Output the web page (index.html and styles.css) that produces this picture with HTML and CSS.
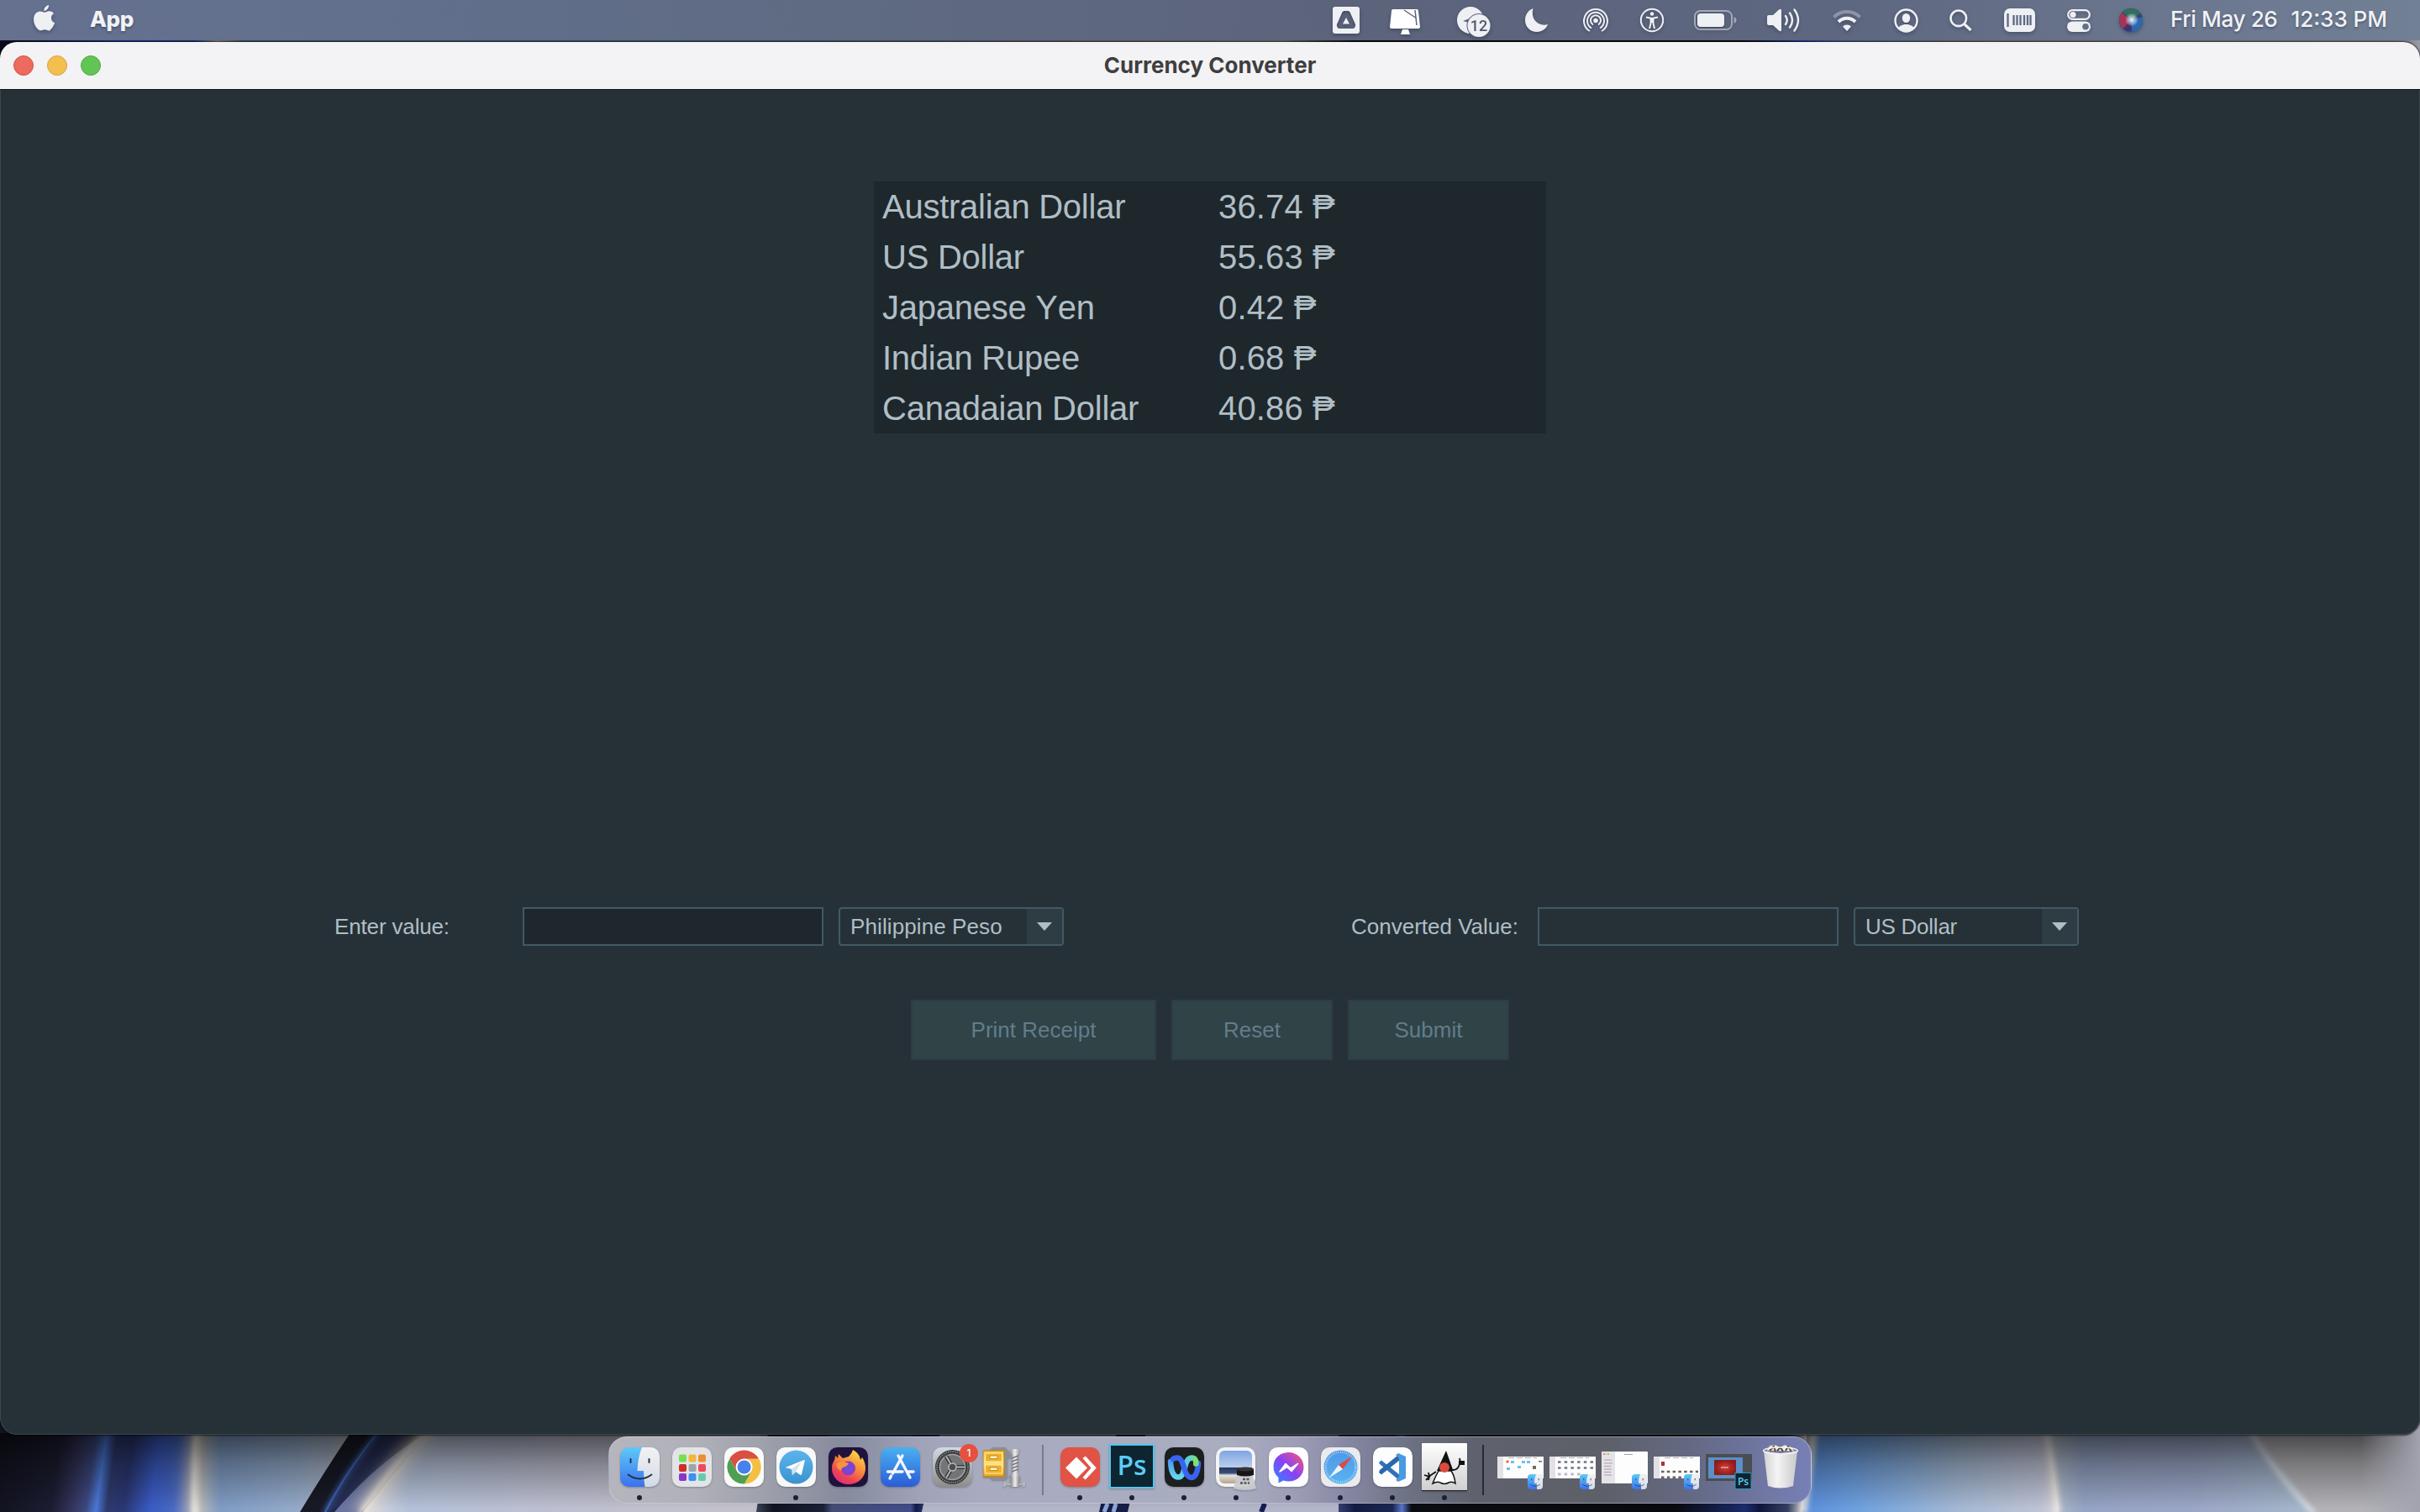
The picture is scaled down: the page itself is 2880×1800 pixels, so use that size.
FILE: index.html
```html
<!DOCTYPE html>
<html lang="en">
<head>
<meta charset="utf-8">
<title>Currency Converter</title>
<link rel="stylesheet" href="styles.css">
</head>
<body>
<svg class="wallpaper" viewBox="0 0 2880 1800" aria-hidden="true">
  <defs>
    <linearGradient id="wBlue" gradientUnits="userSpaceOnUse" x1="0" y1="1750" x2="242" y2="1784">
      <stop offset="0" stop-color="#12131f"/><stop offset=".27" stop-color="#1b1c30"/><stop offset=".37" stop-color="#33345a"/>
      <stop offset=".44" stop-color="#3c4880"/><stop offset=".49" stop-color="#4a78d8"/><stop offset=".54" stop-color="#2e3a6e"/>
      <stop offset=".62" stop-color="#2a3670"/><stop offset=".75" stop-color="#3a5bc4"/><stop offset=".86" stop-color="#4868c0"/>
      <stop offset="1" stop-color="#8d95b4"/>
    </linearGradient>
    <linearGradient id="wSteel" x1="0" x2="1"><stop offset="0" stop-color="#aab0ba"/><stop offset=".15" stop-color="#7f9cc4"/><stop offset=".6" stop-color="#93a9c8"/><stop offset="1" stop-color="#b4b5bd"/></linearGradient>
    <linearGradient id="wGray" gradientUnits="userSpaceOnUse" x1="430" y1="0" x2="905" y2="0"><stop offset="0" stop-color="#d8d8dc"/><stop offset=".12" stop-color="#b3c0d8"/><stop offset=".5" stop-color="#bebfd0"/><stop offset="1" stop-color="#c3c2ca"/></linearGradient>
    <linearGradient id="wMid" gradientUnits="userSpaceOnUse" x1="900" y1="0" x2="1100" y2="0"><stop offset="0" stop-color="#3b4358"/><stop offset=".1" stop-color="#10131f"/><stop offset=".4" stop-color="#1a2036"/><stop offset=".45" stop-color="#444c74"/><stop offset=".92" stop-color="#414c88"/><stop offset=".95" stop-color="#131a48"/><stop offset="1" stop-color="#2a366e"/></linearGradient>
    <linearGradient id="wDark" gradientUnits="userSpaceOnUse" x1="1590" y1="0" x2="2150" y2="0"><stop offset="0" stop-color="#3a4478"/><stop offset=".04" stop-color="#131b42"/><stop offset=".12" stop-color="#1b2750"/><stop offset=".14" stop-color="#5875c8"/><stop offset=".16" stop-color="#0a0c12"/><stop offset=".72" stop-color="#08090e"/><stop offset=".87" stop-color="#1b2b6c"/><stop offset=".9" stop-color="#10153a"/><stop offset=".96" stop-color="#353f62"/><stop offset="1" stop-color="#f3efe6"/></linearGradient>
    <linearGradient id="wRight" gradientUnits="userSpaceOnUse" x1="2150" y1="0" x2="2450" y2="0"><stop offset="0" stop-color="#5b8fdb"/><stop offset=".2" stop-color="#6ea0de"/><stop offset=".6" stop-color="#a3b8d3"/><stop offset=".93" stop-color="#bfc3d5"/><stop offset="1" stop-color="#d8d6dc"/></linearGradient>
    <linearGradient id="wRight2" gradientUnits="userSpaceOnUse" x1="2445" y1="0" x2="2730" y2="0"><stop offset="0" stop-color="#adb9c8"/><stop offset=".12" stop-color="#95a3c4"/><stop offset=".6" stop-color="#9ba6c6"/><stop offset="1" stop-color="#a3b5ca"/></linearGradient>
    <linearGradient id="wShade" x1="0" x2="0" y1="0" y2="1"><stop offset="0" stop-opacity=".6"/><stop offset=".4" stop-opacity=".32"/><stop offset="1" stop-opacity="0"/></linearGradient>
    <linearGradient id="wEdge" x1="0" x2="1"><stop offset="0" stop-color="#a2a3af" stop-opacity="0"/><stop offset="1" stop-color="#a2a3af"/></linearGradient>
    <linearGradient id="wTop" x1="0" x2="1"><stop offset="0" stop-color="#08091a"/><stop offset=".05" stop-color="#1b2f7a"/><stop offset=".08" stop-color="#1d2f70"/><stop offset=".09" stop-color="#8a7c6c"/><stop offset=".1" stop-color="#3b4d63"/><stop offset=".3" stop-color="#3a4c62"/><stop offset=".53" stop-color="#6a6664"/><stop offset=".56" stop-color="#07080f"/><stop offset=".72" stop-color="#07080f"/><stop offset=".745" stop-color="#1d3a90"/><stop offset=".76" stop-color="#3d5c80"/><stop offset=".82" stop-color="#6a6664"/><stop offset=".99" stop-color="#74747c"/><stop offset="1" stop-color="#9b9ba6"/></linearGradient>
    <filter id="soft" filterUnits="userSpaceOnUse" x="0" y="1660" width="2880" height="180"><feGaussianBlur stdDeviation="3"/></filter>
    <filter id="softer" filterUnits="userSpaceOnUse" x="0" y="1660" width="2880" height="180"><feGaussianBlur stdDeviation="9"/></filter>
  </defs>
  <rect width="2880" height="1800" fill="#a4a4ae"/>
  <rect width="1400" height="1700" fill="#0b0c16"/>
  <rect y="40" width="2880" height="30" fill="url(#wTop)"/>
  <path d="M0 1680H240V1800H0z" fill="url(#wBlue)"/>
  <path d="M238 1680Q236 1740 234 1800H430V1680z" fill="url(#wSteel)"/>
  <path d="M507 1700 428 1800H905V1700z" fill="url(#wGray)"/>
  <path d="M425 1694Q392 1742 357 1800H432L520 1690z" fill="#171924"/>
  <path d="M456 1694Q420 1745 388 1800H415L500 1695z" fill="#262f55" filter="url(#soft)"/>
  <path d="M450 1705Q413 1750 386 1802" fill="none" stroke="#4168bd" stroke-width="4" filter="url(#soft)"/>
  <path d="M450 1705Q413 1750 386 1802" fill="none" stroke="#3d62b4" stroke-width="2"/>
  <path d="M508 1706Q450 1740 398 1800H430L525 1690z" fill="#7a86b4" opacity=".8"/>
  <path d="M512 1700Q470 1742 430 1802" fill="none" stroke="#e4ddd4" stroke-width="16" filter="url(#softer)"/>
  <path d="M512 1700Q470 1742 430 1802" fill="none" stroke="#ece7de" stroke-width="6" filter="url(#soft)"/>
  <path d="M235 1690Q230 1750 232 1810" fill="none" stroke="#cfc4b4" stroke-width="16" filter="url(#softer)"/>
  <path d="M235 1690Q230 1750 232 1810" fill="none" stroke="#fbf7ec" stroke-width="6" filter="url(#soft)"/>
  <path d="M915 1700 900 1800H1097L1120 1700z" fill="url(#wMid)"/>
  <path d="M1120 1700 1097 1800H1600V1700z" fill="#b3b5c8"/>
  <path d="M1330 1700 1308 1800H1342L1365 1700z" fill="#161d47"/>
  <path d="M1318 1790 1314 1800M1328 1790 1325 1800" stroke="#8fa6d8" stroke-width="5"/>
  <path d="M1505 1790 1501 1800" stroke="#151d50" stroke-width="6"/>
  <path d="M1593 1680H2150V1800H1593z" fill="url(#wDark)"/>
  <path d="M2160 1700 2145 1800H2460L2435 1700z" fill="url(#wRight)"/>
  <path d="M2435 1700Q2446 1750 2450 1800H2760L2680 1700z" fill="url(#wRight2)"/>
  <path d="M2676 1700 2756 1800H2880V1700z" fill="#b2b2b7"/>
  <path d="M2160 1700 2146 1802M2435 1700Q2443 1740 2449 1802" fill="none" stroke="#ebe7e2" stroke-width="7" filter="url(#soft)"/>
  <path d="M2677 1702Q2705 1750 2754 1802" fill="none" stroke="#e6e4e2" stroke-width="5" filter="url(#soft)"/>
  <rect y="1706" width="2880" height="90" fill="url(#wShade)"/>
  <rect x="2810" y="1680" width="70" height="120" fill="url(#wEdge)"/>
</svg>

<header class="menubar">
  <svg class="apple" viewBox="0 0 26 32"><path d="M18 0c.3 3.600-2.500 7-5.600 7C12 3.700 15 .5 18 0zM13.200 8.700c1.300 0 3-1.500 5.600-1.400 2 .1 4 1 5.200 2.800-4.600 3-3.700 9.200 1.100 11.200-1.100 3.200-3.500 7.500-6 8.900-2.200.8-3.500-1-5.900-1s-3.600 1.700-5.700 1C2.200 28.300-1.600 19 .8 12.800 2 9.500 4.700 7.600 7.500 7.500c2.400 0 4 1.200 5.700 1.200z"/></svg>
  <strong class="menubar-app">App</strong>
  <div class="status">
    <svg class="m0" width="32" height="32" viewBox="0 0 32 32"><path fill-rule="evenodd" d="M3 0h26a3 3 0 0 1 3 3v26a3 3 0 0 1-3 3H3a3 3 0 0 1-3-3V3a3 3 0 0 1 3-3zm11 5c-1.200 0-2 .5-2.600 1.600L5 21c-.6 1.300.8 5 2.600 5h16.800c1.800 0 3.200-3.700 2.600-5L20.600 6.600C20 5.500 19.200 5 18 5zM16 13l4 7.500h-8z"/></svg>
    <svg class="m36 cleaner" width="36" height="32" viewBox="0 0 36 32"><path d="M4 1h28a2 2 0 0 1 2 2l2 19a2 2 0 0 1-2 2H2a2 2 0 0 1-2-2L2 3a2 2 0 0 1 2-2zM15 25h7l2 6H13z"/><path d="M17 2 32 12M30 2l2 18" stroke="#5c647c" stroke-width="1.500" fill="none"/></svg>
    <svg class="m44" width="40" height="36" viewBox="0 0 40 36"><circle cx="16" cy="16" r="16"/><path d="m7 17 16-6-3 12-6-4-7-2z" fill="#5c647c"/><circle cx="26" cy="22.500" r="14.500" fill="#5c647c"/><circle cx="26" cy="22.500" r="13.500"/><text x="26" y="29" text-anchor="middle" class="badge-num">12</text></svg>
    <svg class="m41" width="27" height="28" viewBox="0 0 27 28"><path d="M9.500 0C4 2 0 7.500 0 14c0 8 6.200 14 14 14 6 0 11-3.600 13-9C17 22 6 14 9.500 0z"/></svg>
    <svg class="m42 line" width="30" height="30" viewBox="0 0 30 30"><path d="M8 28A14 14 0 1 1 22 28M10 24.500a10 10 0 1 1 10 0M12 20.500a6 6 0 1 1 6 0" stroke-width="2"/><circle cx="15" cy="15.500" r="2.800" class="solid"/></svg>
    <svg class="m37 line" width="30" height="30" viewBox="0 0 30 30"><circle cx="15" cy="15" r="13.200" stroke-width="2"/><circle cx="15" cy="7.500" r="2.200" class="solid"/><path d="M8 11.500 15 13l7-1.500M13.500 13v6L12 25M16.500 13v6l1.500 6M15 13v5" stroke-width="2"/></svg>
    <svg class="m35" width="51" height="24" viewBox="0 0 51 24"><rect x="1" y="1" width="44" height="22" rx="6.500" fill="none" stroke="#eef0f4" stroke-opacity=".5" stroke-width="2"/><rect x="4" y="4" width="32" height="16" rx="4"/><path d="M47.500 8c4 1.500 4 6.500 0 8z" opacity=".5"/></svg>
    <svg class="m36" width="39" height="28" viewBox="0 0 39 28"><path d="M0 10q0-2 2-2h5l7-6.500q3-2 3 1v23q0 3-3 1L7 20H2q-2 0-2-2z"/><path d="M22 9q3.500 5 0 10M27 5.500q6 8.500 0 17M32.500 1.500q9 12.500 0 25" fill="none" stroke="#eef0f4" stroke-width="2.400" stroke-linecap="round"/></svg>
    <svg class="m39 line" width="34" height="26" viewBox="0 0 34 26"><path d="M1.500 9.500a22 22 0 0 1 31 0" stroke-width="4" opacity=".35"/><path d="M7 15a14 14 0 0 1 20 0" stroke-width="4"/><path d="M12 20.500a7 7 0 0 1 10 0L17 26z" class="solid"/></svg>
    <svg class="m39 line" width="29" height="29" viewBox="0 0 29 29"><circle cx="14.500" cy="14.500" r="13" stroke-width="2.400"/><ellipse cx="14.500" cy="11.500" rx="4.700" ry="5.500" class="solid"/><path d="M5 23.500c3-6 16-6 19 0-5 5-14 5-19 0z" class="solid"/></svg>
    <svg class="m37 line" width="27" height="26" viewBox="0 0 27 26"><circle cx="10.800" cy="10.800" r="9.300" stroke-width="2.600"/><path d="m17.500 17.500 8 7.500" stroke-width="3.200"/></svg>
    <svg class="m38" width="37" height="28" viewBox="0 0 37 28"><rect width="37" height="28" rx="7"/><path d="M4.500 6v16M11.500 8v12M15.500 8v12M19.500 8v12M24 8v12M28 8v12M31.500 8v12" stroke="#5f6a84" stroke-width="2.300"/></svg>
    <svg class="m38" width="28" height="27" viewBox="0 0 28 27"><rect x="1.200" y="1.200" width="25.600" height="10.600" rx="5.300" fill="none" stroke="#eef0f4" stroke-width="2.200"/><circle cx="7" cy="6.500" r="3.600"/><rect y="14.500" width="28" height="12.500" rx="6.200"/><circle cx="22" cy="20.700" r="3.800" fill="#646f8a"/></svg>
    <svg class="m34" width="28" height="28" viewBox="0 0 28 28"><defs><radialGradient id="siri"><stop offset="0" stop-color="#fff"/><stop offset=".3" stop-color="#cfe4f4" stop-opacity=".8"/><stop offset="1" stop-color="#fff" stop-opacity="0"/></radialGradient></defs><circle cx="14" cy="14" r="14" fill="#34456a"/><path d="M14 14 4 4A14 14 0 0 1 25 6z" fill="#2f6f5c"/><path d="M14 14 3 5A14 14 0 0 0 5 24z" fill="#a83358"/><path d="M14 14 28 10A14 14 0 0 1 10 27z" fill="#2c66ac"/><path d="M14 14 5 24q5 5 10 3z" fill="#3c3470"/><circle cx="15" cy="13.500" r="8" fill="url(#siri)"/></svg>
  </div>
  <time class="clock"><span class="date">Fri May 26</span><span>12:33 PM</span></time>
</header>

<main class="window">
  <div class="titlebar">
    <div class="lights"><i class="light close"></i><i class="light minimize"></i><i class="light zoom"></i></div>
    <h1>Currency Converter</h1>
  </div>
  <div class="content">
    <table class="rates">
      <tr><td>Australian Dollar</td><td>36.74 ₱</td></tr>
      <tr><td>US Dollar</td><td>55.63 ₱</td></tr>
      <tr><td>Japanese Yen</td><td>0.42 ₱</td></tr>
      <tr><td>Indian Rupee</td><td>0.68 ₱</td></tr>
      <tr><td>Canadaian Dollar</td><td>40.86 ₱</td></tr>
    </table>
    <form class="converter">
      <div class="fields">
        <label class="label-in" for="amount">Enter value:</label>
        <input class="field editable" id="amount" type="text">
        <div class="combo"><span class="peso">Philippine Peso</span><i><svg width="18" height="10" viewBox="0 0 18 10"><path d="M0 0h18L9 10z"/></svg></i></div>
        <label class="label-out" for="result">Converted Value:</label>
        <input class="field" id="result" type="text" readonly>
        <div class="combo"><span class="dollar">US Dollar</span><i><svg width="18" height="10" viewBox="0 0 18 10"><path d="M0 0h18L9 10z"/></svg></i></div>
      </div>
      <div class="actions">
        <button class="wide" disabled>Print Receipt</button>
        <button disabled>Reset</button>
        <button disabled>Submit</button>
      </div>
    </form>
  </div>
</main>

<nav class="dock">
  <svg class="defs" aria-hidden="true"><defs>
    <linearGradient id="gCyan" x2="0" y2="1"><stop stop-color="#5fc9f8"/><stop offset="1" stop-color="#3a72ee"/></linearGradient>
    <linearGradient id="gWhite" x2="0" y2="1"><stop stop-color="#f2f2f5"/><stop offset="1" stop-color="#d3dae4"/></linearGradient>
    <linearGradient id="gTele" x2="0" y2="1"><stop stop-color="#5bb5ec"/><stop offset="1" stop-color="#3a93d0"/></linearGradient>
    <linearGradient id="gStore" x2="0" y2="1"><stop stop-color="#4ab0f0"/><stop offset="1" stop-color="#2a5cd8"/></linearGradient>
    <linearGradient id="gFox" x1=".8" x2=".2" y2="1"><stop stop-color="#fce34a"/><stop offset=".4" stop-color="#f88f3c"/><stop offset=".75" stop-color="#ee4258"/><stop offset="1" stop-color="#d8307c"/></linearGradient>
    <linearGradient id="gSet" x2="0" y2="1"><stop stop-color="#cfdbe2"/><stop offset="1" stop-color="#8e8c88"/></linearGradient>
    <linearGradient id="gZip" x2="0" y2="1"><stop stop-color="#f7c43b"/><stop offset=".5" stop-color="#fbe27e"/><stop offset="1" stop-color="#e8a01e"/></linearGradient>
    <linearGradient id="gMetal" x2="1" y2="0"><stop stop-color="#8c8c8c"/><stop offset=".5" stop-color="#efefef"/><stop offset="1" stop-color="#8a8a8a"/></linearGradient>
    <linearGradient id="gWx1" x2="0" y2="1"><stop stop-color="#4f9cf0"/><stop offset="1" stop-color="#62d8ee"/></linearGradient>
    <linearGradient id="gWx2" x1=".4" x2="1" y2="0"><stop stop-color="#5ccde0"/><stop offset="1" stop-color="#7ae36c"/></linearGradient>
    <linearGradient id="gSky" x2="0" y2="1"><stop stop-color="#7fa5e6"/><stop offset=".5" stop-color="#b9cdea"/><stop offset=".52" stop-color="#28365e"/><stop offset=".68" stop-color="#34507c"/><stop offset=".75" stop-color="#e6e2dc"/><stop offset="1" stop-color="#b5a48c"/></linearGradient>
    <linearGradient id="gMsg" x1="0" y1="1" x2="1" y2="0"><stop stop-color="#2a8cff"/><stop offset=".5" stop-color="#8a40f6"/><stop offset="1" stop-color="#fb5a74"/></linearGradient>
    <linearGradient id="gSaf" x2="0" y2="1"><stop stop-color="#4f96e6"/><stop offset="1" stop-color="#59b4f2"/></linearGradient>
    <linearGradient id="gPaper" x2="0" y2="1"><stop stop-color="#fff"/><stop offset="1" stop-color="#cfcfcf"/></linearGradient>
    <linearGradient id="gBin" x2="1" y2="0"><stop stop-color="#d2d2d2"/><stop offset=".4" stop-color="#f4f4f4"/><stop offset="1" stop-color="#c9c9c9"/></linearGradient>
    <radialGradient id="gPurple"><stop stop-color="#6a50e8"/><stop offset="1" stop-color="#8a3cc0"/></radialGradient>
    <radialGradient id="gRed"><stop stop-color="#d83c34"/><stop offset="1" stop-color="#8c1c1c"/></radialGradient>
    <clipPath id="tile"><rect width="47" height="47" rx="10.500"/></clipPath>
    <symbol id="finder" viewBox="0 0 47 47"><g clip-path="url(#tile)"><path d="M0 0h47v47H0z" fill="url(#gCyan)"/><path d="M26 0h21v47H29.500q-1.500-9-1.500-19h-7.500Q21 12 26 0z" fill="url(#gWhite)"/><path d="M12.500 14v4M34.500 14v4" stroke="#22303f" stroke-width="2" stroke-linecap="round"/><path d="M9.500 32.500q14 10 28 0" fill="none" stroke="#22303f" stroke-width="1.800" stroke-linecap="round"/></g></symbol>
  </defs></svg>

  <div class="app running"><svg class="icon"><use href="#finder"/></svg></div>
  <div class="app"><svg class="icon" viewBox="0 0 47 47"><rect width="47" height="47" rx="10.500" fill="#e3e4e8"/><g><rect x="8" y="8.500" width="9" height="9" rx="2" fill="#76e04c"/><rect x="19.500" y="8.500" width="9" height="9" rx="2" fill="#f4b63c"/><rect x="31" y="8.500" width="9" height="9" rx="2" fill="#ec8f2e"/><rect x="8" y="20" width="9" height="9" rx="2" fill="#cc3028"/><rect x="19.500" y="20" width="9" height="9" rx="2" fill="#9aa5ac"/><rect x="31" y="20" width="9" height="9" rx="2" fill="#ee4a5c"/><rect x="8" y="31" width="9" height="9" rx="2" fill="#8a36cc"/><rect x="19.500" y="31" width="9" height="9" rx="2" fill="#3b90f4"/><rect x="31" y="31" width="9" height="9" rx="2" fill="#62cdaa"/></g></svg></div>
  <div class="app"><svg class="icon" viewBox="0 0 47 47"><rect width="47" height="47" rx="10.500" fill="#fafafa"/><path d="M6.300 13.500a20 20 0 0 1 34.600 0l-3 3H23.600L15 28.500z" fill="#d94f41"/><path d="M6.300 13.500A20 20 0 0 0 24 43.500l8.700-15.200L23.600 33 15 28.500z" fill="#4f9f53"/><path d="M41 13.500A20 20 0 0 1 24 43.500l8.300-15L32 18l-8.400-4.500z" fill="#f4bf42"/><circle cx="23.600" cy="23.500" r="10" fill="#fff"/><circle cx="23.600" cy="23.500" r="8" fill="#4a80ec"/></svg></div>
  <div class="app running"><svg class="icon" viewBox="0 0 47 47"><rect width="47" height="47" rx="10.500" fill="#f8f8f9"/><circle cx="23.500" cy="23.500" r="20" fill="url(#gTele)"/><path d="m10.500 24 22.500-9q1-.2.700 1.200L30 32q-.5 1.500-2 .5l-10-6.500z" fill="#fff"/><path d="m18 26 .8 7.500 4-4L30 17z" fill="#d4e2ee"/></svg></div>
  <div class="app"><svg class="icon" viewBox="0 0 47 47"><rect width="47" height="47" rx="10.500" fill="#20123c"/><path d="M29 3q-1 4-5 8l-7 2-5-5q-1 3-.5 5L8 10q0 4-2 7-2 3-2 8c0 11 9 19 20 19s20-8 20-19q0-7-4-13l-2 3q-1-8-9-12z" fill="url(#gFox)"/><circle cx="23.500" cy="25" r="8.500" fill="url(#gPurple)"/><path d="M9 20q6-5 15-1-2 4-7 5-2 1-2 4-5-2-6-8z" fill="#f6943a"/></svg></div>
  <div class="app"><svg class="icon" viewBox="0 0 47 47"><rect width="47" height="47" rx="10.500" fill="url(#gStore)"/><path d="M26 10 14.500 31M21 10l14 26M8.500 29H26M33 29h6M12.500 34l-1.500 3" stroke="#f3f6fc" stroke-width="3.400" stroke-linecap="round"/></svg></div>
  <div class="app"><svg class="icon" viewBox="0 0 47 47"><rect width="47" height="47" rx="10.500" fill="url(#gSet)"/><circle cx="23.500" cy="23.500" r="20.500" fill="#3a3c3e"/><circle cx="23.500" cy="23.500" r="18.500" fill="none" stroke="#8b8d8e" stroke-width="1.500" stroke-dasharray="1.500 1.200"/><circle cx="23.500" cy="23.500" r="15" fill="#737576" stroke="#a2a4a5" stroke-width="1.500"/><path d="M23.500 23.500H38M23.500 23.500 16 10.500M23.500 23.500 16 36.500" stroke="#25282a" stroke-width="4.500"/><path d="M23.500 23.500H38M23.500 23.500 16 10.500M23.500 23.500 16 36.500" stroke="#b7b9ba" stroke-width="2"/><circle cx="23.500" cy="23.500" r="4.500" fill="#4b4d4e" stroke="#b7b9ba" stroke-width="1.500"/></svg><b class="notice">1</b></div>
  <div class="app"><svg class="icon zip" viewBox="0 0 51 50"><path d="M7 5 11 1h15l7 7v6h-4v22h4v-3l-7 7H11l-4-4z" fill="#8e8f90"/><path d="M0 5h25v31H0z" fill="url(#gZip)" stroke="#b97c14"/><path d="M2.500 8h20v10h-20zM2.500 22h20v10h-20z" fill="#eeb12c" stroke="#fff0a8"/><path d="M8 11h9v3.500H8zM8 25h9v3.500H8z" fill="#fff6c8" stroke="#c48a1c"/><path d="M33 3h10v5l-2 2v22l3 4v12H32V36l3-4V10l-2-2z" fill="url(#gMetal)"/><path d="m34 14 8-3m-8 7 8-3m-8 7 8-3m-8 7 8-3m-8 7 8-3" stroke="#77787a" stroke-width="1.500"/><path d="M24 42h3v2h20v-2h3v6h-3v-2H27v2h-3z" fill="#b5b6b8"/><path d="M33 36h10v12H33z" fill="url(#gMetal)"/></svg></div>
  <span class="sep light-sep"></span>
  <div class="app running"><svg class="icon" viewBox="0 0 47 47"><rect width="47" height="47" rx="10.500" fill="#e05345"/><path d="M6 24.500 19 11.500l13 13-13 13z" fill="#fff"/><path d="m26.500 13 3.300-2.500 13 14-13 14L26.500 36l10-11.500z" fill="#fff"/></svg></div>
  <div class="app running"><div class="icon ps"><span>Ps</span></div></div>
  <div class="app running"><svg class="icon" viewBox="0 0 47 47"><rect width="47" height="47" rx="10.500" fill="#1d1e20"/><path d="M23 27C26 17 27 12.500 33 12.500q4 0 4.500 7" fill="none" stroke="url(#gWx2)" stroke-width="6.500" stroke-linecap="round"/><path d="M7 17q1 18.500 9.500 18.500Q21.500 35.500 24 24" fill="none" stroke="url(#gWx1)" stroke-width="6.500" stroke-linecap="round"/><path d="M10 14q1.500-1.500 5-1.500 5 0 8 11.500t8.500 12q7.500 0 8.500-17" fill="none" stroke="#3a64ee" stroke-width="6.500" stroke-linecap="round"/><path d="M37.300 17.500v2" stroke="#7ae36c" stroke-width="6.500" stroke-linecap="round"/></svg></div>
  <div class="app running"><svg class="icon preview" viewBox="0 0 50 51"><rect width="47" height="47" rx="10.500" fill="#f3f3f4"/><rect x="4" y="4" width="39" height="39" rx="6" fill="url(#gSky)"/><path d="M26 30h18v4l4 15q-13 4-27 0l4-15z" fill="#c9cbce" opacity=".95"/><path d="M25 26h20v7q-10 3-20 0z" fill="#161616"/><ellipse cx="35" cy="26" rx="10" ry="2.500" fill="#343434"/><path d="M29 42.500h11M32 38h8" stroke="#55585c" stroke-width="2.500" stroke-dasharray="3 1.500"/></svg></div>
  <div class="app running"><svg class="icon" viewBox="0 0 47 47"><rect width="47" height="47" rx="10.500" fill="#fdfdfe"/><path d="M23.500 6C13 6 5.500 13.500 5.500 23q0 8 6 13v6.500l6-3q3 1 6 1c10.500 0 18-7.500 18-17S34 6 23.500 6z" fill="url(#gMsg)"/><path d="m13 29 7-9.500 6 5.500 8.500-5.500-7.500 9-5.500-5z" fill="#fff" stroke="#fff" stroke-width="1.500" stroke-linejoin="round"/></svg></div>
  <div class="app running"><svg class="icon" viewBox="0 0 47 47"><rect width="47" height="47" rx="10.500" fill="#ebebed"/><circle cx="23.500" cy="23.500" r="20" fill="url(#gSaf)"/><circle cx="23.500" cy="23.500" r="17.800" fill="none" stroke="#bfdcf6" stroke-width="2.500" stroke-dasharray=".8 1.500"/><path d="M37.500 10.500 26 26l-5-5z" fill="#e2483c"/><path d="M9.500 36.500 21 21l5 5z" fill="#f2f2f2"/></svg></div>
  <div class="app running"><svg class="icon" viewBox="0 0 47 47"><rect width="47" height="47" rx="10.500" fill="#fdfdfd"/><path d="m7 18 3-2.500L32 33v7L8 20z" fill="#2f74ba"/><path d="m7 30 3 2.500L32 15V7.500L8 27z" fill="#2a68aa"/><path d="m30 7 9 4v26l-9 4-3-2 4-4V13l-4-4z" fill="#4a9ae0"/></svg></div>
  <div class="app running"><svg class="icon duke" viewBox="0 0 54 57"><rect width="54" height="57" rx="1" fill="url(#gPaper)"/><path d="M0 56.500h54" stroke="#222"/><path d="M20 33q-4 7-7 15 6-3 9-1 5 3 10 0 4-2 8 1-1-9-5-15z" fill="#fff" stroke="#111" stroke-width="1.500"/><path d="M29 9 18 33h19.500z" fill="#111"/><circle cx="27" cy="29" r="6" fill="#dc4a3c"/><path d="M17 34 8 40M3 38l6 2-4 4M8 35l1 5-1 4M37 32q7 0 8-8M46 23l-1-5" fill="none" stroke="#111" stroke-width="1.800"/><path d="M44 21h7v5h-7z" fill="#111"/></svg></div>
  <span class="sep"></span>
  <div class="app"><svg class="thumb" viewBox="0 0 55 40"><rect y="1" width="55" height="26" fill="#fdfdfd"/><rect y="1" width="7" height="26" fill="#e3e1e6"/><path d="M13 2.500h34" stroke="#aaa" stroke-dasharray="7 3"/><circle cx="12" cy="7" r="1.800" fill="#e8704a"/><path d="M16 6h4v3h-4zM29 6h4v3h-4zM35 6h4v3h-4zM24 12h4v3h-4zM11 14h4v3h-4z" fill="#70bdf0"/><path d="M49 6h4v1.500h-4zM42 12h4v4h-4z" fill="#786c58"/><use href="#finder" x="36" y="22" width="18" height="18"/></svg></div>
  <div class="app"><svg class="thumb" viewBox="0 0 55 40"><rect y="1" width="55" height="26" fill="#fdfdfd"/><rect y="1" width="7" height="26" fill="#e3e1e6"/><path d="M13 2.500h34" stroke="#aaa" stroke-dasharray="7 3"/><path d="M10 7.500h43M10 14.500h43" stroke="#6a7488" stroke-width="2.500" stroke-dasharray="3.500 4.200"/><path d="M10 22h28" stroke="#b8bcc6" stroke-width="3" stroke-dasharray="3.500 4.200"/><use href="#finder" x="36" y="22" width="18" height="18"/></svg></div>
  <div class="app"><svg class="thumb tall" viewBox="0 0 55 46"><rect y="1" width="55" height="38" rx="1" fill="#fdfdfd"/><rect y="1" width="16" height="38" fill="#e6e2e8"/><circle cx="3" cy="4" r="1" fill="#e66"/><circle cx="5.500" cy="4" r="1" fill="#eb5"/><circle cx="8" cy="4" r="1" fill="#6c5"/><path d="M3 11h9M3 15h10M3 18.500h8M3 22h9M3 25.500h8M3 29h9M27 4.500h10" stroke="#a99fae" stroke-width="1.200"/><use href="#finder" x="36" y="28" width="18" height="18"/></svg></div>
  <div class="app"><svg class="thumb" viewBox="0 0 55 40"><rect y="1" width="55" height="26" fill="#fdfdfd"/><rect y="1" width="7" height="26" fill="#e3e1e6"/><path d="M13 2.500h34" stroke="#aaa" stroke-dasharray="7 3"/><path d="M9 7h4v5H9z" fill="#a83444"/><path d="M9 19h44M9 25.700h25" stroke="#6c625c" stroke-width="2.500" stroke-dasharray="3.500 3.300"/><use href="#finder" x="36" y="22" width="18" height="18"/></svg></div>
  <div class="app"><svg class="thumb psd" viewBox="0 0 55 43"><path d="M0 1h55v32H0z" fill="#4b4d50"/><path d="M3 5h41v25H3z" fill="#5b8fca"/><path d="M10 8h26v18H10z" fill="url(#gRed)"/><path d="M18 17h9" stroke="#e0a8a0" stroke-width="1.500"/><path d="M35 23.500h19v19H35z" fill="#0d2431" stroke="#3596b8"/><text x="44.500" y="38" text-anchor="middle" class="ps-mini">Ps</text></svg></div>
  <div class="app"><svg class="trash" viewBox="0 0 42 54"><path d="m4 8 4-6 7-1 5 3 6-3 7 2 5 6z" fill="#eceff0" stroke="#8c8e90"/><path d="m8 8 5-5 2 6M17 8l4-4 3 5M27 8l3-5 4 6" fill="none" stroke="#57483c" stroke-width="2"/><path d="M1 8q20 6 40 0l-5 42q-15 5-30 0z" fill="url(#gBin)"/><ellipse cx="21" cy="8" rx="20.500" ry="4" fill="none" stroke="#f2f2f2" stroke-width="1.500"/></svg></div>
</nav>
</body>
</html>
```
FILE: styles.css
```css
* { box-sizing: border-box; }

body {
  margin: 0;
  width: 2880px;
  height: 1800px;
  overflow: hidden;
  position: relative;
  display: flex;
  flex-direction: column;
  font-family: "Liberation Sans", Arial, sans-serif;
}

svg { display: block; flex: none; }

.wallpaper {
  position: absolute;
  inset: 0;
  width: 2880px;
  height: 1800px;
  z-index: -1;
}

/* Menu bar */
.menubar {
  height: 48px;
  flex: none;
  display: flex;
  align-items: flex-start;
  padding-left: 40px;
  background: linear-gradient(90deg, #65718f 0, #626f8d 450px, #5f6b82 1000px, #5c647c 1600px, #5e6780 2200px, #6a758e 2540px, #718095 2880px);
  color: #f1f2f5;
  font-family: Inter, sans-serif;
  font-size: 26px;
  line-height: 48px;
}

.menubar svg { fill: #eef0f4; filter: drop-shadow(0 2px 2px rgba(20, 25, 45, .35)); }
.menubar .line { fill: none; stroke: #eef0f4; }
.menubar .solid { fill: #eef0f4; stroke: none; }
.menubar .cleaner { fill: #fff; margin-top: 4px; }
.apple { width: 26px; height: 32px; margin-top: 6px; }
.menubar-app { width: 1479px; margin: -1px 0 0 41px; font-weight: 800; letter-spacing: -.4px; text-shadow: 0 2px 3px rgba(20, 25, 45, .35); }
.status { display: flex; align-items: center; height: 48px; width: 964px; }
.badge-num { font: 500 18px Roboto, sans-serif; fill: #4f586f; }
.m34 { margin-left: 34px; }
.m35 { margin-left: 35px; }
.m36 { margin-left: 36px; }
.m37 { margin-left: 37px; }
.m38 { margin-left: 38px; }
.m39 { margin-left: 39px; }
.m41 { margin-left: 41px; }
.m42 { margin-left: 42px; }
.m44 { margin-left: 44px; margin-top: 4px; }
.clock { display: flex; gap: 16px; margin: -1px 0 0 33px; font-weight: 500; white-space: nowrap; text-shadow: 0 2px 3px rgba(20, 25, 45, .35); }
.date { letter-spacing: -.35px; }

/* Window */
.window {
  height: 1658px;
  margin-top: 2px;
  flex: none;
  border-radius: 20px;
  overflow: hidden;
  background: #263137;
  box-shadow: 0 0 2px 1px rgba(0, 0, 0, .6);
}

.titlebar {
  height: 57px;
  display: grid;
  grid-template-columns: 1fr auto 1fr;
  align-items: center;
  padding-left: 16px;
  background: #f3f2f4;
  border-bottom: 1px solid #0b171b;
}

.titlebar h1 { margin: 0 16px 2px 0; color: #3e3e40; font: 700 26px Inter, sans-serif; }
.lights { display: flex; gap: 16px; }
.light { width: 24px; height: 24px; border-radius: 50%; border: 1px solid; }
.close { background: #ec6a5e; border-color: #d2544a; }
.minimize { background: #f4bf4f; border-color: #d6a143; }
.zoom { background: #61c554; border-color: #52a842; }

.content {
  height: 1601px;
  padding-top: 109px;
  border: solid #3b464b;
  border-width: 0 1px 1px;
  border-radius: 0 0 20px 20px;
}

.rates {
  width: 800px;
  margin: 0 auto;
  border-collapse: collapse;
  table-layout: fixed;
  background: #1e272c;
  color: #b0bec5;
  font-size: 40px;
  font-kerning: none;
  line-height: 60px;
}

.rates td { height: 60px; padding: 0 10px; white-space: nowrap; }
.rates td:first-child { letter-spacing: -.25px; }
.rates td:last-child { letter-spacing: .15px; }

.converter { color: #b0bec5; font-size: 26px; }

.fields {
  display: flex;
  align-items: center;
  height: 46px;
  margin-top: 564px;
  padding-left: 397px;
}

.label-in { width: 224px; letter-spacing: -.15px; }
.label-out { width: 222px; margin-left: 342px; }
.dollar { letter-spacing: -.25px; }
.peso { letter-spacing: .1px; }

.field {
  width: 358px;
  height: 46px;
  margin: 0 18px 0 0;
  padding: 0 8px;
  border: 2px solid #415965;
  border-radius: 0;
  background: #263137;
  color: inherit;
  font: inherit;
}

.editable { background: #1e272c; }

.combo {
  width: 268px;
  height: 46px;
  display: flex;
  justify-content: space-between;
  border: 2px solid #415965;
  border-radius: 4px;
  line-height: 42px;
  padding-left: 12px;
}

.combo i { width: 42px; display: flex; align-items: center; justify-content: center; background: #2e3c43; }
.combo svg { fill: #b0bec5; }

.actions { display: flex; justify-content: center; gap: 18px; margin-top: 64px; }

button {
  width: 192px;
  height: 72px;
  padding: 1px 0 0;
  border: 2px solid #2e3c43;
  background: #304347;
  color: #607d8b;
  font: 26px "Liberation Sans", Arial, sans-serif;
}

button.wide { width: 292px; }

/* Dock */
.dock {
  width: 1432px;
  height: 80px;
  margin: 2px 0 0 724px;
  flex: none;
  display: flex;
  align-items: flex-start;
  padding-left: 5px;
  border: 1px solid rgba(225, 228, 238, .4);
  border-radius: 22px;
  background: linear-gradient(90deg, #b5b6bd 0, #b0b1b9 100px, #9fa1ac 180px, #858a9d 280px, #a0a3b8 370px, #a8abc0 440px, #a9adc0 740px, #9d9cb6 820px, #8587a2 880px, #6d7284 950px, #5f626d 1030px, #5d6068 1180px, #646984 1290px, #7780b6 1430px);
}

.defs { width: 0; height: 0; position: absolute; }
.app { position: relative; width: 62px; height: 78px; flex: none; display: flex; justify-content: center; }

.running::after {
  content: "";
  position: absolute;
  left: 28px;
  top: 69px;
  width: 6px;
  height: 6px;
  border-radius: 50%;
  background: #1b2036;
}

.icon { width: 47px; height: 47px; margin-top: 12px; filter: drop-shadow(0 1px 1px rgba(0, 0, 0, .25)); }
.icon.zip { width: 51px; height: 50px; margin-top: 11px; }
.icon.preview { width: 50px; height: 51px; margin-left: 2px; }
.icon.duke { width: 54px; height: 57px; margin-top: 7px; }

.icon.ps {
  width: 54px;
  height: 53px;
  margin-top: 8px;
  border: 2px solid #52c4ef;
  background: #0d2431;
  color: #5accf5;
  font: 600 32px/46px "Open Sans", sans-serif;
  text-align: center;
}

.ps-mini { font: 600 12px "Open Sans", sans-serif; fill: #5accf5; }

.notice {
  position: absolute;
  left: 40px;
  top: 8px;
  width: 22px;
  height: 22px;
  border-radius: 50%;
  background: #e5503f;
  color: #fff;
  font: 500 12px/22px Inter, sans-serif;
  text-align: center;
}

.sep { width: 2px; height: 60px; margin: 9px 12px 0 14px; background: #252a38; }
.light-sep { background: #777b8d; }

.thumb { width: 55px; height: 40px; align-self: flex-end; margin-bottom: 16px; }
.thumb.tall { height: 46px; }
.thumb.psd { height: 43px; }
.trash { width: 42px; height: 54px; margin-top: 8px; }
```
